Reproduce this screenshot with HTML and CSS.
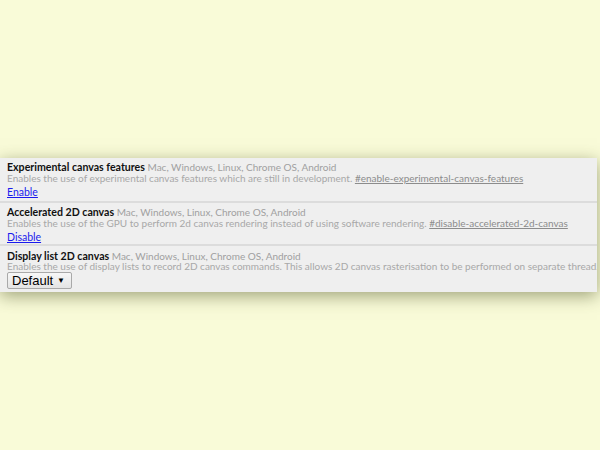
FILE: index.html
```html
<!DOCTYPE html>
<html lang="en">
<head>
    <meta charset="UTF-8">
    <title>Experiments</title>
    <link rel="stylesheet" href="styles.css">
</head>
<body>
    <div class="experiments">
        <div class="experiment">
            <div class="experiment-name">Experimental canvas features <span class="platforms">Mac, Windows, Linux, Chrome OS, Android</span></div>
            <div class="experiment-desc">Enables the use of experimental canvas features which are still in development. <a class="permalink" href="#">#enable-experimental-canvas-features</a></div>
            <a class="action" href="#">Enable</a>
        </div>
        <div class="experiment">
            <div class="experiment-name">Accelerated 2D canvas <span class="platforms">Mac, Windows, Linux, Chrome OS, Android</span></div>
            <div class="experiment-desc">Enables the use of the GPU to perform 2d canvas rendering instead of using software rendering. <a class="permalink" href="#">#disable-accelerated-2d-canvas</a></div>
            <a class="action" href="#">Disable</a>
        </div>
        <div class="experiment">
            <div class="experiment-name">Display list 2D canvas <span class="platforms">Mac, Windows, Linux, Chrome OS, Android</span></div>
            <div class="experiment-desc">Enables the use of display lists to record 2D canvas commands. This allows 2D canvas rasterisation to be performed on separate thread. <a class="permalink" href="#">#enable-display-list-2d-canvas</a></div>
            <div class="select">Default <span class="arrow">&#9660;</span></div>
        </div>
    </div>
</body>
</html>
```

FILE: styles.css
```css
body {
    margin: 0;
    height: 450px;
    background-color: #f9fbd8;
    font-family: Lato, sans-serif;
    padding-top: 158px;
    box-sizing: border-box;
    overflow: hidden;
}
.experiments {
    width: 597px;
    background-color: #efefef;
    overflow: hidden;
    box-shadow: 0 4px 16px rgba(70, 75, 30, 0.5);
}
.experiment {
    padding: 4px 7px 0;
    border-top: 2px solid #dcdcdc;
    height: 37px;
    white-space: nowrap;
    font-size: 10px;
    line-height: 11px;
}
.experiment:first-child {
    border-top: none;
    height: 39px;
}
.experiment:last-child {
    padding-top: 5px;
    height: 41px;
}
.experiment-name {
    font-size: 10.6px;
    font-weight: bold;
    color: #111;
    height: 11px;
}
.experiment:last-child .experiment-name {
    height: 10px;
    line-height: 10px;
}
.platforms {
    font-size: 10px;
    font-weight: normal;
    color: #a0a0a0;
}
.experiment-desc {
    color: #a8a8a8;
    height: 12px;
}
.experiment:last-child .experiment-desc {
    height: 11px;
    line-height: 11px;
}
.permalink {
    color: #8c8c8c;
}
.action {
    display: block;
    margin-top: 1px;
    font-size: 10.5px;
    color: #1a1aee;
    line-height: 12px;
}
.select {
    display: flex;
    justify-content: space-between;
    align-items: center;
    width: 65px;
    height: 17px;
    padding: 0 6px 0 4px;
    box-sizing: border-box;
    border: 1px solid #a9a9a9;
    border-radius: 2px;
    background: linear-gradient(#f7f7f7, #e4e4e4);
    font-family: "Liberation Sans", Arial, sans-serif;
    font-size: 13px;
    color: #000;
}
.arrow {
    font-size: 8px;
}
```
